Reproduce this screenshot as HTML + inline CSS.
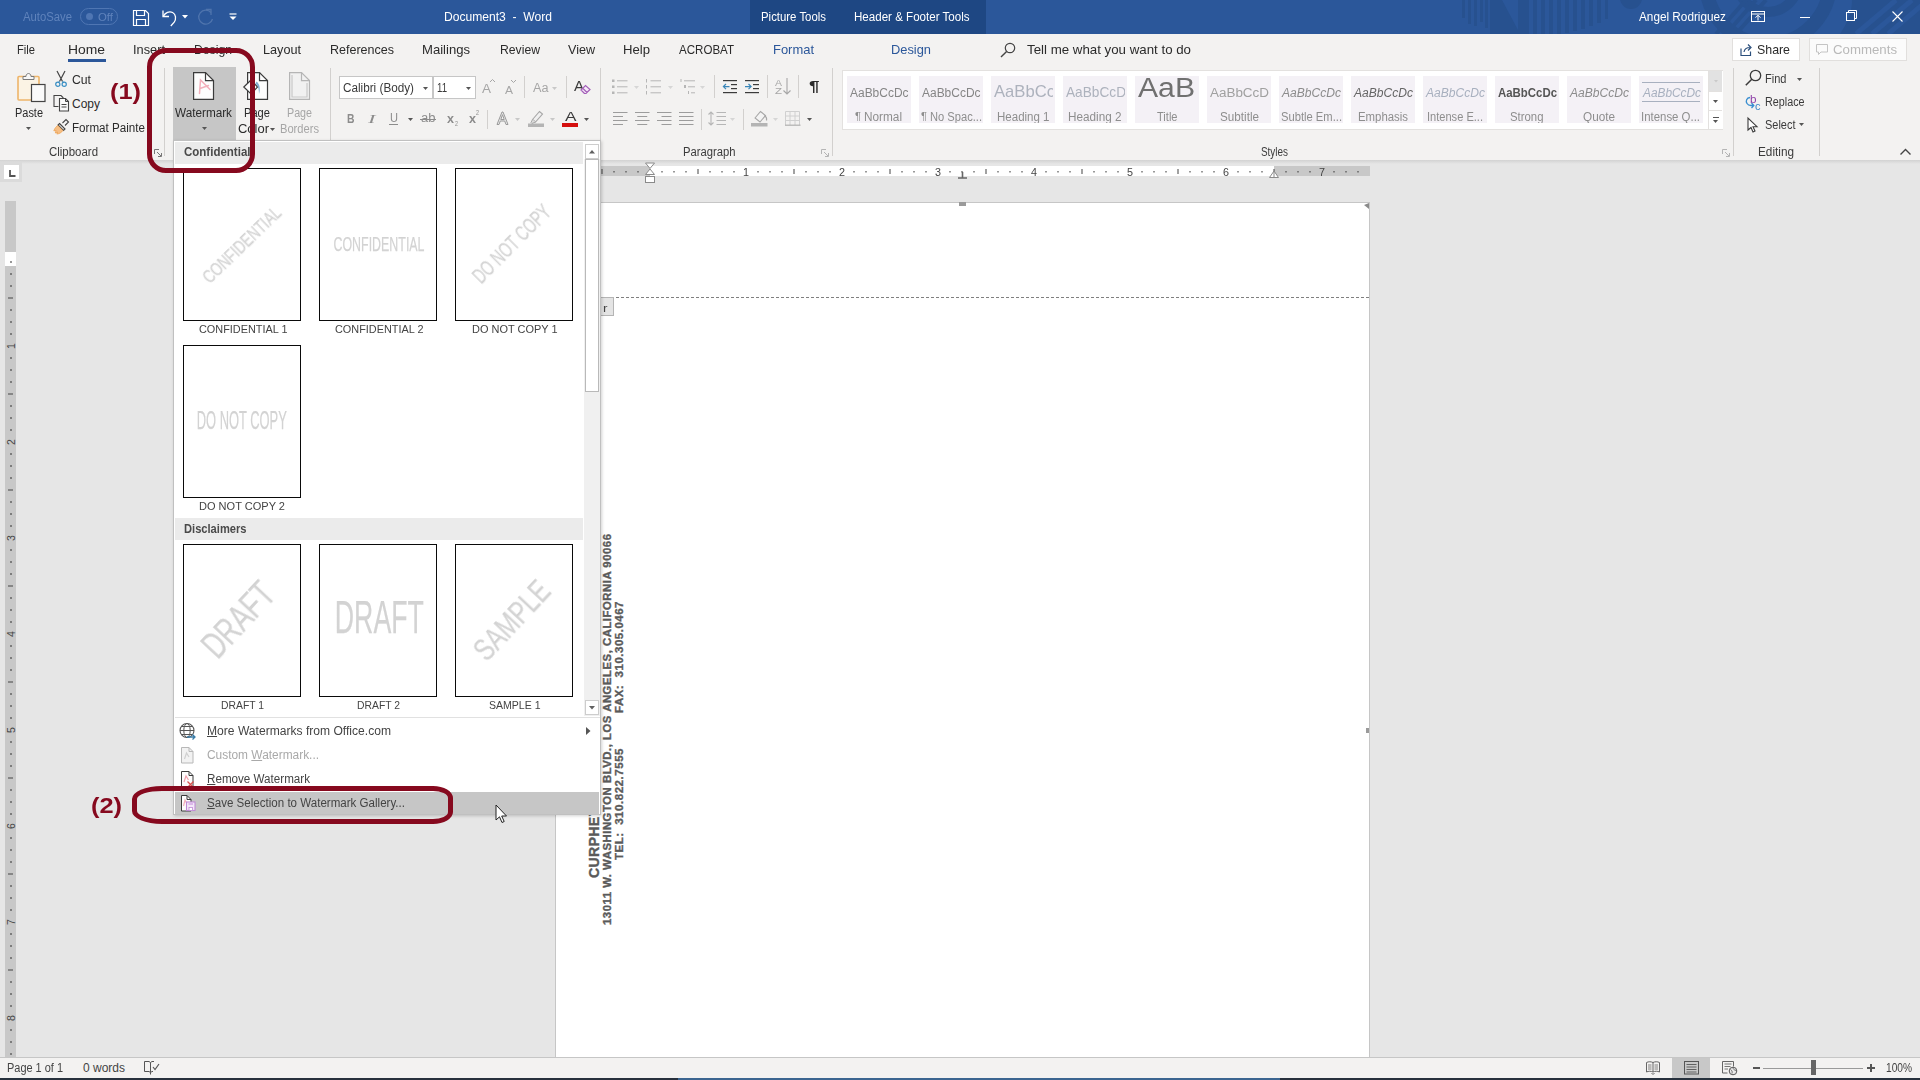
<!DOCTYPE html>
<html><head><meta charset="utf-8"><title>Document3 - Word</title>
<style>
html,body{margin:0;padding:0;}
body{width:1920px;height:1080px;overflow:hidden;position:relative;background:#e6e6e6;font-family:"Liberation Sans",sans-serif;}
div,svg,span.t{position:absolute;}
span.t{white-space:pre;transform-origin:0 50%;}
svg{overflow:visible;}
u{text-decoration:underline;}
</style></head><body>
<div style="left:0px;top:0px;width:1920px;height:34px;background:#2b579a;"></div>
<svg style="left:0px;top:0px;overflow:hidden;" width="1920" height="34" viewBox="0 0 1920 34"><g fill="#27518f">
<rect x="1462" y="0" width="3" height="18"/><rect x="1468" y="0" width="3" height="24"/><rect x="1474" y="0" width="3" height="26"/><rect x="1480" y="0" width="3" height="22"/><rect x="1485" y="0" width="3" height="28"/>
<path d="M1490 0h12l16 30v-30h11v34h-39z"/>
<rect x="1533" y="0" width="4" height="34"/><rect x="1541" y="0" width="4" height="34"/><rect x="1549" y="0" width="4" height="34"/><rect x="1557" y="0" width="4" height="34"/><rect x="1565" y="0" width="4" height="33"/><rect x="1573" y="0" width="4" height="31"/><rect x="1581" y="0" width="4" height="29"/><rect x="1589" y="0" width="4" height="26"/><rect x="1597" y="0" width="4" height="23"/><rect x="1605" y="0" width="3" height="19"/>
<circle cx="1631" cy="-2" r="11"/>
</g>
<g fill="none" stroke="#27518f"><circle cx="1768" cy="-18" r="62" stroke-width="14"/><circle cx="1768" cy="-18" r="30" stroke-width="10"/>
<path d="M1716 34l30-34M1726 34l30-34M1736 34l30-34" stroke-width="4"/></g>
<g fill="#27518f"><path d="M1840 34c8-12 12-22 12-34h68v34z"/></g>
<g fill="none" stroke="#2b579a" stroke-width="5"><path d="M1856 34l40-34M1872 34l40-34M1888 34l40-34"/></g></svg>
<div style="left:750px;top:0px;width:236px;height:34px;background:#1e4783;"></div>
<div style="left:0px;top:34px;width:1920px;height:127px;background:#f3f2f1;"></div>
<div style="left:0px;top:160px;width:1920px;height:4px;background:linear-gradient(#d2d2d2,#e6e6e6);"></div>
<div style="left:555px;top:202px;width:815px;height:856px;background:#ffffff;border-left:1px solid #c6c6c6;border-top:1px solid #c6c6c6;border-right:1px solid #c6c6c6;box-sizing:border-box;"></div>
<div style="left:0px;top:1057px;width:1920px;height:21px;background:#f3f2f1;border-top:1px solid #c6c6c6;box-sizing:border-box;"></div>
<div style="left:0px;top:1078px;width:1920px;height:2px;background:#27313d;"></div>
<div style="left:678px;top:1078px;width:602px;height:2px;background:#3b6590;"></div>
<span class="t" style="left:23px;top:8.5px;font-size:12px;line-height:16px;color:#5f83bc;transform:scaleX(0.9416);">AutoSave</span>
<div style="left:80px;top:8px;width:38px;height:17px;border:1px solid #4f76b3;border-radius:9px;box-sizing:border-box;"></div>
<div style="left:86px;top:13px;width:7px;height:7px;background:#4f76b3;border-radius:50%;"></div>
<span class="t" style="left:98px;top:9.5px;font-size:11px;line-height:14px;color:#5f83bc;transform:scaleX(1.0366);">Off</span>
<svg style="left:132px;top:9px;" width="18" height="18" viewBox="0 0 18 18"><path d="M1.5 1.5h12l3 3v12h-15z M4.5 1.5v5h8v-5 M4.5 16.5v-6h9v6" fill="none" stroke="#fff" stroke-width="1.2"/></svg>
<svg style="left:161px;top:8px;" width="18" height="18" viewBox="0 0 18 18"><path d="M2 2.5v6h6" fill="none" stroke="#fff" stroke-width="1.3"/><path d="M2.3 8.2c2-3.6 6-5.4 9.300-3.700c3.500 1.900 3.700 6.500 1.600 9.700l-3.400 3.800" fill="none" stroke="#fff" stroke-width="1.3"/></svg>
<svg style="left:182px;top:15px;" width="6" height="4" viewBox="0 0 6 4"><path d="M0 0h6l-3 3.500z" fill="#fff"/></svg>
<svg style="left:196px;top:8px;" width="18" height="18" viewBox="0 0 18 18"><path d="M10 1.500h5v5.500" fill="none" stroke="#4f74ad" stroke-width="1.300"/><path d="M15 4.500a7 7 0 1 0 1.500 6.500" fill="none" stroke="#4f74ad" stroke-width="1.300"/></svg>
<svg style="left:229px;top:13px;" width="8" height="8" viewBox="0 0 8 8"><path d="M0.500 1h7" stroke="#fff" stroke-width="1.200"/><path d="M0.500 3.500h7l-3.500 3.500z" fill="#fff"/></svg>
<span class="t" style="left:444px;top:8.5px;font-size:12px;line-height:16px;color:#ffffff;transform:scaleX(1.0079);">Document3  -  Word</span>
<span class="t" style="left:761px;top:8.5px;font-size:12px;line-height:16px;color:#ffffff;transform:scaleX(0.9492);">Picture Tools</span>
<span class="t" style="left:854px;top:8.5px;font-size:12px;line-height:16px;color:#ffffff;transform:scaleX(0.9638);">Header &amp; Footer Tools</span>
<span class="t" style="left:1639px;top:9.0px;font-size:12px;line-height:16px;color:#ffffff;transform:scaleX(0.9806);">Angel Rodriguez</span>
<svg style="left:1751px;top:10.5px;" width="15" height="12" viewBox="0 0 15 12"><rect x="0.500" y="0.500" width="13" height="10" fill="none" stroke="#fff"/><path d="M0.500 3h13" stroke="#fff"/><path d="M7 9.500v-5M4.500 6.700l2.500-2.500 2.500 2.500" fill="none" stroke="#fff"/></svg>
<div style="left:1800px;top:17px;width:10px;height:1px;background:#ffffff;"></div>
<svg style="left:1846px;top:10px;" width="12" height="12" viewBox="0 0 12 12"><rect x="0.500" y="2.500" width="8" height="8" fill="none" stroke="#fff"/><path d="M2.500 2.500v-2h8v8h-2" fill="none" stroke="#fff"/></svg>
<svg style="left:1892px;top:11px;" width="11" height="11" viewBox="0 0 11 11"><path d="M0.500 0.500l10 10M10.500 0.500l-10 10" stroke="#fff" stroke-width="1.100"/></svg>
<span class="t" style="left:17px;top:41.0px;font-size:13px;line-height:17px;color:#2b2b2b;transform:scaleX(0.8594);">File</span>
<span class="t" style="left:68px;top:41.0px;font-size:13px;line-height:17px;color:#2b2b2b;transform:scaleX(1.0670);">Home</span>
<span class="t" style="left:133px;top:41.0px;font-size:13px;line-height:17px;color:#2b2b2b;transform:scaleX(0.9842);">Insert</span>
<span class="t" style="left:194px;top:41.0px;font-size:13px;line-height:17px;color:#2b2b2b;transform:scaleX(0.9391);">Design</span>
<span class="t" style="left:263px;top:41.0px;font-size:13px;line-height:17px;color:#2b2b2b;transform:scaleX(0.9736);">Layout</span>
<span class="t" style="left:330px;top:41.0px;font-size:13px;line-height:17px;color:#2b2b2b;transform:scaleX(0.9627);">References</span>
<span class="t" style="left:422px;top:41.0px;font-size:13px;line-height:17px;color:#2b2b2b;transform:scaleX(1.0067);">Mailings</span>
<span class="t" style="left:500px;top:41.0px;font-size:13px;line-height:17px;color:#2b2b2b;transform:scaleX(0.9385);">Review</span>
<span class="t" style="left:568px;top:41.0px;font-size:13px;line-height:17px;color:#2b2b2b;transform:scaleX(0.9663);">View</span>
<span class="t" style="left:623px;top:41.0px;font-size:13px;line-height:17px;color:#2b2b2b;transform:scaleX(1.0099);">Help</span>
<span class="t" style="left:679px;top:41.0px;font-size:13px;line-height:17px;color:#2b2b2b;transform:scaleX(0.8889);">ACROBAT</span>
<div style="left:68px;top:59px;width:38px;height:3px;background:#2b579a;"></div>
<span class="t" style="left:773px;top:41.0px;font-size:13px;line-height:17px;color:#2b579a;transform:scaleX(0.9958);">Format</span>
<span class="t" style="left:891px;top:41.0px;font-size:13px;line-height:17px;color:#2b579a;transform:scaleX(0.9885);">Design</span>
<svg style="left:1000px;top:42px;" width="16" height="16" viewBox="0 0 16 16"><circle cx="10" cy="6" r="4.700" fill="none" stroke="#444" stroke-width="1.200"/><path d="M6.600 9.400l-5.600 5.600" stroke="#444" stroke-width="1.400"/></svg>
<span class="t" style="left:1027px;top:41.0px;font-size:13px;line-height:17px;color:#2b2b2b;transform:scaleX(1.0223);">Tell me what you want to do</span>
<div style="left:1732px;top:38px;width:68px;height:23px;background:#ffffff;border:1px solid #e1dfdd;box-sizing:border-box;"></div>
<svg style="left:1740px;top:43px;" width="13" height="13" viewBox="0 0 13 13"><path d="M1 5.500v7h9.500v-4" fill="none" stroke="#2b4f7c" stroke-width="1.200"/><path d="M4 9c.5-3 2.500-4.500 6-4.500M8 1.500l3 3-3 3" fill="none" stroke="#2b4f7c" stroke-width="1.200"/></svg>
<span class="t" style="left:1757px;top:41.0px;font-size:13px;line-height:17px;color:#2b2b2b;transform:scaleX(0.9513);">Share</span>
<div style="left:1809px;top:38px;width:98px;height:23px;background:#fbfbfb;border:1px solid #e1dfdd;box-sizing:border-box;"></div>
<svg style="left:1816px;top:44px;" width="13" height="12" viewBox="0 0 13 12"><path d="M0.500 0.500h11v7.500h-6.500l-2.500 2.500v-2.500h-2z" fill="none" stroke="#c4c4c4"/></svg>
<span class="t" style="left:1833px;top:41.0px;font-size:13px;line-height:17px;color:#b9b9b9;transform:scaleX(1.0183);">Comments</span>
<svg style="left:17px;top:71px;" width="29" height="31" viewBox="0 0 29 31"><rect x="1" y="5.500" width="21" height="23.500" rx="1" fill="#fbf3e4" stroke="#eeb56a" stroke-width="1.600"/>
<path d="M6 8.500v-3h3c0-4 5-4 5 0h3v3z" fill="#f7f7f7" stroke="#7a7a7a" stroke-width="1"/>
<rect x="14.500" y="13.500" width="13.500" height="17" fill="#fafafa" stroke="#444" stroke-width="1.200"/></svg>
<span class="t" style="left:15px;top:104.5px;font-size:12px;line-height:16px;color:#2b2b2b;transform:scaleX(0.9125);">Paste</span>
<svg style="left:26.0px;top:127.0px;" width="5" height="3.5" viewBox="0 0 5 3.5"><path d="M0 0h5l-2.5 3.0z" fill="#555"/></svg>
<svg style="left:55px;top:70px;" width="12" height="18" viewBox="0 0 12 18"><path d="M2 1l5.500 10.500M10 1l-5.500 10.500" stroke="#444" stroke-width="1.200" fill="none"/>
<circle cx="2.800" cy="14.300" r="2.100" fill="none" stroke="#3a8fc4" stroke-width="1.200"/><circle cx="9.200" cy="14.300" r="2.100" fill="none" stroke="#3a8fc4" stroke-width="1.200"/>
<path d="M4.500 11.500l-1 1.200M7.500 11.500l1 1.200" stroke="#3a8fc4" stroke-width="1.200"/></svg>
<span class="t" style="left:72px;top:71.5px;font-size:12px;line-height:16px;color:#2b2b2b;transform:scaleX(1.0175);">Cut</span>
<svg style="left:53px;top:95px;" width="17" height="17" viewBox="0 0 17 17"><path d="M5.500 11.500h-4.500v-11h7l2 2v1" fill="none" stroke="#444" stroke-width="1.100"/>
<path d="M6.500 3.500h6l3 3v9.500h-9z" fill="#fafafa" stroke="#444" stroke-width="1.100"/><path d="M12.500 3.500v3h3" fill="none" stroke="#444" stroke-width="1"/>
<path d="M8.500 9.500h5M8.500 12h5" stroke="#444" stroke-width="1"/></svg>
<span class="t" style="left:72px;top:96.0px;font-size:12px;line-height:16px;color:#2b2b2b;">Copy</span>
<svg style="left:53px;top:118px;" width="17" height="17" viewBox="0 0 17 17"><path d="M9.500 5l3.500-3.500 2.500 2.500-3.500 3.500" fill="#f5f5f5" stroke="#444" stroke-width="1.100"/>
<path d="M6.500 5.500l5.500 5.500-1.500 1.500-5.500-5.500z" fill="#f5f5f5" stroke="#444" stroke-width="1.100"/>
<path d="M4.800 7.500l5 5c-1 2-4 3.500-6 3.500l1-2-2.500 1 .8-2.500-2.300.3c1-2.500 2.500-4.500 4-5.300z" fill="#f6bf86" stroke="#eda354" stroke-width="0.800"/></svg>
<span class="t" style="left:72px;top:119.5px;font-size:12px;line-height:16px;color:#2b2b2b;transform:scaleX(0.9686);">Format Painte</span>
<span class="t" style="left:49px;top:143.5px;font-size:12px;line-height:16px;color:#3b3b3b;transform:scaleX(0.9540);">Clipboard</span>
<svg style="left:154px;top:149px;" width="8" height="8" viewBox="0 0 8 8"><path d="M0.500 5v-4.500h4.500" fill="none" stroke="#777"/><path d="M3 3l4 4M7.500 4v3.500h-3.500" fill="none" stroke="#777"/></svg>
<div style="left:164px;top:68px;width:1px;height:88px;background:#d2d0ce;"></div>
<div style="left:173px;top:67px;width:63px;height:74px;background:#c6c6c6;"></div>
<svg style="left:193px;top:72px;" width="21" height="28" viewBox="0 0 21 28"><path d="M0.600 0.600h11.900l8 8v18.800h-19.900z" fill="#fdfdfd" stroke="#3b3b3b" stroke-width="1.200"/><path d="M12.500 0.600v8h8" fill="none" stroke="#3b3b3b" stroke-width="1.200"/>
<path d="M6.500 21.500l1-13.500 9.500 9.500M7 16.500l8.500-3" fill="none" stroke="#f3b0bb" stroke-width="1.500" stroke-linecap="round"/></svg>
<span class="t" style="left:175px;top:104.5px;font-size:12px;line-height:16px;color:#2b2b2b;transform:scaleX(0.9789);">Watermark</span>
<svg style="left:201.5px;top:127.0px;" width="5" height="3.5" viewBox="0 0 5 3.5"><path d="M0 0h5l-2.5 3.0z" fill="#555"/></svg>
<svg style="left:243px;top:72px;" width="25" height="28" viewBox="0 0 25 28"><path d="M4.600 0.600h11.900l8 8v18.800h-19.900z" fill="#fdfdfd" stroke="#3b3b3b" stroke-width="1.200"/><path d="M16.500 0.600v8h8" fill="none" stroke="#3b3b3b" stroke-width="1.200"/>
<path d="M8 8l-7.200 7 7.200 7 6.500-7z" fill="#fdfdfd" stroke="#3b3b3b" stroke-width="1.200"/><path d="M13.500 9.500c3.500 2.500 4 8 2.500 12.500 0-4.500-.5-7.500-3.500-10.500z" fill="#6b9cc8" opacity="0.850"/></svg>
<span class="t" style="left:244px;top:105.0px;font-size:12px;line-height:16px;color:#2b2b2b;transform:scaleX(0.9277);">Page</span>
<span class="t" style="left:238px;top:121.0px;font-size:12px;line-height:16px;color:#2b2b2b;transform:scaleX(1.0811);">Color</span>
<svg style="left:270.0px;top:127.5px;" width="5" height="3.5" viewBox="0 0 5 3.5"><path d="M0 0h5l-2.5 3.0z" fill="#555"/></svg>
<svg style="left:289px;top:72px;" width="21" height="28" viewBox="0 0 21 28"><path d="M0.600 0.600h11.900l8 8v18.800h-19.900z" fill="#f1f1f1" stroke="#b5b5b5" stroke-width="1.200"/><path d="M12.500 0.600v8h8" fill="none" stroke="#b5b5b5" stroke-width="1.200"/>
<path d="M3 3v22h15v-14" fill="none" stroke="#c9c9c9" stroke-width="1.200"/></svg>
<span class="t" style="left:287px;top:105.0px;font-size:12px;line-height:16px;color:#a6a6a6;transform:scaleX(0.8921);">Page</span>
<span class="t" style="left:280px;top:121.0px;font-size:12px;line-height:16px;color:#a6a6a6;transform:scaleX(0.9282);">Borders</span>
<div style="left:330px;top:68px;width:1px;height:73px;background:#d2d0ce;"></div>
<div style="left:339px;top:76px;width:94px;height:23px;background:#fff;border:1px solid #c6c6c6;box-sizing:border-box;"></div>
<div style="left:433px;top:76px;width:43px;height:23px;background:#fff;border:1px solid #c6c6c6;border-left:1px solid #c6c6c6;box-sizing:border-box;"></div>
<span class="t" style="left:342.5px;top:79.8px;font-size:12px;line-height:16px;color:#3a3a3a;transform:scaleX(0.9768);">Calibri (Body)</span>
<svg style="left:422.8px;top:87.0px;" width="5" height="3.5" viewBox="0 0 5 3.5"><path d="M0 0h5l-2.5 3.0z" fill="#555"/></svg>
<span class="t" style="left:437px;top:79.8px;font-size:12px;line-height:16px;color:#3a3a3a;transform:scaleX(0.8028);">11</span>
<svg style="left:465.8px;top:87.0px;" width="5" height="3.5" viewBox="0 0 5 3.5"><path d="M0 0h5l-2.5 3.0z" fill="#555"/></svg>
<span class="t" style="left:482px;top:80.5px;font-size:12px;line-height:16px;color:#a6a6a6;transform:scaleX(1.1243);">A</span>
<svg style="left:490px;top:79px;" width="5" height="3" viewBox="0 0 5 3"><path d="M0 3l2.500-2.500 2.500 2.500" fill="none" stroke="#a6a6a6"/></svg>
<span class="t" style="left:504.5px;top:82.5px;font-size:10.5px;line-height:14px;color:#a6a6a6;transform:scaleX(1.1423);">A</span>
<svg style="left:511px;top:80px;" width="5" height="3" viewBox="0 0 5 3"><path d="M0 0l2.500 2.500 2.500-2.500" fill="none" stroke="#a6a6a6"/></svg>
<div style="left:524px;top:76px;width:1px;height:22px;background:#d2d0ce;"></div>
<span class="t" style="left:532.5px;top:80.0px;font-size:12.5px;line-height:16px;color:#a6a6a6;transform:scaleX(1.0138);">Aa</span>
<svg style="left:551.9px;top:87.0px;" width="5" height="3.5" viewBox="0 0 5 3.5"><path d="M0 0h5l-2.5 3.0z" fill="#c8c8c8"/></svg>
<div style="left:566px;top:76px;width:1px;height:22px;background:#d2d0ce;"></div>
<span class="t" style="left:574px;top:76.5px;font-size:14px;line-height:18px;color:#3b3b3b;transform:scaleX(1.0710);">A</span>
<svg style="left:580px;top:85px;" width="11" height="10" viewBox="0 0 11 10"><path d="M4.500 8.500l-3.500-3.500 4.500-4.500 4.500 4 -4 4z M3 3.500l4 4" fill="#f5eaf8" stroke="#a35fb8" stroke-width="1.200"/></svg>
<span class="t" style="left:346.5px;top:109.5px;font-size:13px;line-height:17px;color:#8c8c8c;font-weight:bold;transform:scaleX(0.7989);">B</span>
<span class="t" style="left:368px;top:109.5px;font-size:13px;line-height:17px;color:#8c8c8c;font-style:italic;font-family:'Liberation Serif',serif;transform:scaleX(1.7322);">I</span>
<span class="t" style="left:389.5px;top:109.5px;font-size:12.5px;line-height:16px;color:#8c8c8c;transform:scaleX(0.8863);">U</span>
<div style="left:389px;top:124px;width:9px;height:1px;background:#8c8c8c;"></div>
<svg style="left:407.7px;top:117.5px;" width="5" height="3.5" viewBox="0 0 5 3.5"><path d="M0 0h5l-2.5 3.0z" fill="#555"/></svg>
<span class="t" style="left:420.5px;top:110.0px;font-size:12px;line-height:16px;color:#8c8c8c;transform:scaleX(1.0864);">ab</span>
<div style="left:420px;top:119px;width:16px;height:1px;background:#8c8c8c;"></div>
<span class="t" style="left:447px;top:110.5px;font-size:12.5px;line-height:16px;color:#8c8c8c;font-weight:bold;transform:scaleX(1.0070);">x</span>
<span class="t" style="left:454.5px;top:119.5px;font-size:6.5px;line-height:8px;color:#8c8c8c;transform:scaleX(0.8297);">2</span>
<span class="t" style="left:468.5px;top:110.5px;font-size:12.5px;line-height:16px;color:#8c8c8c;font-weight:bold;transform:scaleX(1.0070);">x</span>
<span class="t" style="left:476px;top:109.0px;font-size:6.5px;line-height:8px;color:#8c8c8c;transform:scaleX(0.8297);">2</span>
<div style="left:487px;top:110px;width:1px;height:19px;background:#d2d0ce;"></div>
<svg style="left:496px;top:111px;" width="13" height="14" viewBox="0 0 13 14"><path d="M1 13.500l5-12.500h1l5 12.500h-2l-1.300-3.500h-4.400l-1.300 3.500z M4.800 8.500h3.400l-1.700-4.800z" fill="#e9e9e9" stroke="#9a9a9a" stroke-width="1" fill-rule="evenodd"/></svg>
<svg style="left:515.3px;top:117.5px;" width="5" height="3.5" viewBox="0 0 5 3.5"><path d="M0 0h5l-2.5 3.0z" fill="#c8c8c8"/></svg>
<svg style="left:528px;top:110px;" width="16" height="17" viewBox="0 0 16 17"><path d="M4.500 9.500l7-8 3 2.500-7 8z" fill="#f0f0f0" stroke="#a6a6a6" stroke-width="1.100"/><path d="M4.500 9.500l-1.500 3 1 1 3.500-1.500" fill="#ddd" stroke="#a6a6a6" stroke-width="1"/><rect x="0" y="13.500" width="16" height="3.500" fill="#b4b4b4"/></svg>
<svg style="left:550.2px;top:117.5px;" width="5" height="3.5" viewBox="0 0 5 3.5"><path d="M0 0h5l-2.5 3.0z" fill="#c8c8c8"/></svg>
<span class="t" style="left:564.5px;top:108.0px;font-size:13px;line-height:17px;color:#3b3b3b;transform:scaleX(1.3264);">A</span>
<div style="left:562px;top:123px;width:16px;height:4px;background:#d50f0f;"></div>
<svg style="left:584.2px;top:117.5px;" width="5" height="3.5" viewBox="0 0 5 3.5"><path d="M0 0h5l-2.5 3.0z" fill="#555"/></svg>
<div style="left:600px;top:68px;width:1px;height:73px;background:#d2d0ce;"></div>
<svg style="left:612px;top:79px;" width="16" height="15" viewBox="0 0 16 15"><rect x="0" y="0.5" width="2.500" height="2.500" fill="#b6b6b6"/><rect x="5" y="1.3" width="10.500" height="1" fill="#b6b6b6"/><rect x="0" y="6.5" width="2.500" height="2.500" fill="#b6b6b6"/><rect x="5" y="7.3" width="10.500" height="1" fill="#b6b6b6"/><rect x="0" y="12.5" width="2.500" height="2.500" fill="#b6b6b6"/><rect x="5" y="13.3" width="10.500" height="1" fill="#b6b6b6"/></svg>
<svg style="left:633.5px;top:85.5px;" width="5" height="3.5" viewBox="0 0 5 3.5"><path d="M0 0h5l-2.5 3.0z" fill="#d6d6d6"/></svg>
<svg style="left:645px;top:79px;" width="17" height="15" viewBox="0 0 17 15"><rect x="1" y="0.0" width="1" height="3.500" fill="#b6b6b6"/><rect x="5.500" y="1.3" width="10.500" height="1" fill="#b6b6b6"/><rect x="1" y="6.0" width="1" height="3.500" fill="#b6b6b6"/><rect x="5.500" y="7.3" width="10.500" height="1" fill="#b6b6b6"/><rect x="1" y="12.0" width="1" height="3.500" fill="#b6b6b6"/><rect x="5.500" y="13.3" width="10.500" height="1" fill="#b6b6b6"/></svg>
<svg style="left:667.5px;top:85.5px;" width="5" height="3.5" viewBox="0 0 5 3.5"><path d="M0 0h5l-2.5 3.0z" fill="#d6d6d6"/></svg>
<svg style="left:680px;top:79px;" width="16" height="15" viewBox="0 0 16 15"><rect x="0.500" y="0" width="1" height="3" fill="#b6b6b6"/><rect x="4" y="1.300" width="11" height="1" fill="#b6b6b6"/><rect x="4" y="6" width="2" height="3" fill="#b6b6b6"/><rect x="8" y="7.300" width="7" height="1" fill="#b6b6b6"/><rect x="8" y="12" width="1" height="3" fill="#b6b6b6"/><rect x="11" y="13.300" width="4" height="1" fill="#b6b6b6"/></svg>
<svg style="left:700.0px;top:85.5px;" width="5" height="3.5" viewBox="0 0 5 3.5"><path d="M0 0h5l-2.5 3.0z" fill="#d6d6d6"/></svg>
<div style="left:714px;top:75px;width:1px;height:23px;background:#d2d0ce;"></div>
<svg style="left:723px;top:80px;" width="15" height="14" viewBox="0 0 15 14"><rect x="0" y="0" width="14" height="1.200" fill="#3b3b3b"/><rect x="8" y="4" width="6" height="1.200" fill="#3b3b3b"/><rect x="8" y="8" width="6" height="1.200" fill="#3b3b3b"/><rect x="0" y="12" width="14" height="1.200" fill="#3b3b3b"/><path d="M6.500 6.600h-6M3 4l-2.600 2.600 2.600 2.600" fill="none" stroke="#3a86b8" stroke-width="1.200"/></svg>
<svg style="left:745px;top:80px;" width="15" height="14" viewBox="0 0 15 14"><rect x="0" y="0" width="14" height="1.200" fill="#3b3b3b"/><rect x="8" y="4" width="6" height="1.200" fill="#3b3b3b"/><rect x="8" y="8" width="6" height="1.200" fill="#3b3b3b"/><rect x="0" y="12" width="14" height="1.200" fill="#3b3b3b"/><path d="M0 6.600h6M3.500 4l2.600 2.600-2.600 2.600" fill="none" stroke="#3a86b8" stroke-width="1.200"/></svg>
<div style="left:767px;top:75px;width:1px;height:23px;background:#d2d0ce;"></div>
<span class="t" style="left:775px;top:76.5px;font-size:9.5px;line-height:12px;color:#a6a6a6;transform:scaleX(1.1048);">A</span>
<span class="t" style="left:775px;top:85.0px;font-size:9.5px;line-height:12px;color:#a6a6a6;transform:scaleX(1.2062);">Z</span>
<svg style="left:783px;top:78px;" width="8" height="17" viewBox="0 0 8 17"><path d="M4 0v16M0.500 12.500l3.500 3.500 3.500-3.500" fill="none" stroke="#a6a6a6" stroke-width="1.100"/></svg>
<div style="left:798px;top:75px;width:1px;height:23px;background:#d2d0ce;"></div>
<span class="t" style="left:808.5px;top:77.0px;font-size:14px;line-height:18px;color:#2b2b2b;font-weight:bold;transform:scaleX(1.3486);">¶</span>
<svg style="left:612.5px;top:112px;" width="14.5" height="14" viewBox="0 0 14.5 14"><rect x="0" y="0" width="14.5" height="1" fill="#9c9c9c"/><rect x="0" y="4" width="10" height="1" fill="#9c9c9c"/><rect x="0" y="8" width="14.5" height="1" fill="#9c9c9c"/><rect x="0" y="12" width="10" height="1" fill="#9c9c9c"/></svg>
<svg style="left:634.5px;top:112px;" width="14.5" height="14" viewBox="0 0 14.5 14"><rect x="0.0" y="0" width="14.5" height="1" fill="#9c9c9c"/><rect x="2.25" y="4" width="10" height="1" fill="#9c9c9c"/><rect x="0.0" y="8" width="14.5" height="1" fill="#9c9c9c"/><rect x="2.25" y="12" width="10" height="1" fill="#9c9c9c"/></svg>
<svg style="left:656.5px;top:112px;" width="14.5" height="14" viewBox="0 0 14.5 14"><rect x="0.0" y="0" width="14.5" height="1" fill="#9c9c9c"/><rect x="4.5" y="4" width="10" height="1" fill="#9c9c9c"/><rect x="0.0" y="8" width="14.5" height="1" fill="#9c9c9c"/><rect x="4.5" y="12" width="10" height="1" fill="#9c9c9c"/></svg>
<svg style="left:678.5px;top:112px;" width="14.5" height="14" viewBox="0 0 14.5 14"><rect x="0" y="0" width="14.5" height="1" fill="#9c9c9c"/><rect x="0" y="4" width="14.5" height="1" fill="#9c9c9c"/><rect x="0" y="8" width="14.5" height="1" fill="#9c9c9c"/><rect x="0" y="12" width="14.5" height="1" fill="#9c9c9c"/></svg>
<div style="left:701px;top:109px;width:1px;height:21px;background:#d2d0ce;"></div>
<svg style="left:708px;top:111px;" width="19" height="15" viewBox="0 0 19 15"><path d="M3 1v13M0.500 3.500l2.500-2.500 2.500 2.500M0.500 11.500l2.500 2.500 2.500-2.500" fill="none" stroke="#b6b6b6" stroke-width="1.100"/><rect x="8.500" y="1" width="9.500" height="1" fill="#b6b6b6"/><rect x="8.500" y="5" width="9.500" height="1" fill="#b6b6b6"/><rect x="8.500" y="9" width="9.500" height="1" fill="#b6b6b6"/><rect x="8.500" y="13" width="9.500" height="1" fill="#b6b6b6"/></svg>
<svg style="left:729.5px;top:117.5px;" width="5" height="3.5" viewBox="0 0 5 3.5"><path d="M0 0h5l-2.5 3.0z" fill="#d6d6d6"/></svg>
<div style="left:743px;top:109px;width:1px;height:21px;background:#d2d0ce;"></div>
<svg style="left:751px;top:110px;" width="17" height="17" viewBox="0 0 17 17"><path d="M4 8l5.500-6.500 5 4-5.500 6.500z" fill="#f3f3f3" stroke="#a6a6a6" stroke-width="1.100"/><path d="M13.500 5.500c1.500 1 2.500 3 2 5" fill="none" stroke="#a6a6a6" stroke-width="1.100"/><rect x="0" y="13" width="16.500" height="3.500" fill="#b4b4b4"/></svg>
<svg style="left:772.5px;top:117.5px;" width="5" height="3.5" viewBox="0 0 5 3.5"><path d="M0 0h5l-2.5 3.0z" fill="#d6d6d6"/></svg>
<svg style="left:785px;top:111px;" width="16" height="15" viewBox="0 0 16 15"><path d="M0.500 0.500h14M0.500 5h14M0.500 9.500h14M0.500 0.500v13.500M5 0.500v13.500M10 0.500v13.500M14.500 0.500v13.500" fill="none" stroke="#d0d0d0" stroke-width="1"/><path d="M0 14.200h15.500" stroke="#b0b0b0" stroke-width="1.200"/></svg>
<svg style="left:807.2px;top:117.5px;" width="5" height="3.5" viewBox="0 0 5 3.5"><path d="M0 0h5l-2.5 3.0z" fill="#555"/></svg>
<span class="t" style="left:682.5px;top:143.5px;font-size:12px;line-height:16px;color:#3b3b3b;transform:scaleX(0.9368);">Paragraph</span>
<svg style="left:821px;top:149px;" width="8" height="8" viewBox="0 0 8 8"><path d="M0.500 5v-4.500h4.500" fill="none" stroke="#b5b5b5"/><path d="M3 3l4 4M7.500 4v3.500h-3.500" fill="none" stroke="#b5b5b5"/></svg>
<div style="left:832px;top:68px;width:1px;height:88px;background:#d2d0ce;"></div>
<div style="left:842px;top:70px;width:881px;height:60px;background:#ffffff;border:1px solid #e3e1df;box-sizing:border-box;"></div>
<div style="left:847px;top:76px;width:64px;height:47px;background:#f4f1f6;overflow:hidden;">
<div style="left:2px;top:0;width:59.500px;height:32px;overflow:hidden;">
<span class="t" style="left:0.5px;top:9.0px;font-size:12.5px;line-height:16px;color:#858585;transform:scaleX(0.9570);">AaBbCcDc</span>
</div>
<span class="t" style="left:8px;top:34.0px;font-size:10px;line-height:13px;color:#8e8e8e;transform:scaleX(1.1169);">¶</span>
<span class="t" style="left:17px;top:32.5px;font-size:12px;line-height:16px;color:#8e8e8e;transform:scaleX(0.9826);">Normal</span>
</div>
<div style="left:919px;top:76px;width:64px;height:47px;background:#f4f1f6;overflow:hidden;">
<div style="left:2px;top:0;width:59.500px;height:32px;overflow:hidden;">
<span class="t" style="left:0.5px;top:9.0px;font-size:12.5px;line-height:16px;color:#858585;transform:scaleX(0.9570);">AaBbCcDc</span>
</div>
<span class="t" style="left:2px;top:34.0px;font-size:10px;line-height:13px;color:#8e8e8e;transform:scaleX(1.1169);">¶</span>
<span class="t" style="left:11px;top:32.5px;font-size:12px;line-height:16px;color:#8e8e8e;transform:scaleX(0.9281);">No Spac...</span>
</div>
<div style="left:991px;top:76px;width:64px;height:47px;background:#f4f1f6;overflow:hidden;">
<div style="left:2px;top:0;width:59.500px;height:32px;overflow:hidden;">
<span class="t" style="left:1px;top:5.0px;font-size:17px;line-height:22px;color:#adb2bd;transform:scaleX(0.9781);">AaBbCc</span>
</div>
<span class="t" style="left:5.5px;top:32.5px;font-size:12px;line-height:16px;color:#8e8e8e;transform:scaleX(0.9597);">Heading 1</span>
</div>
<div style="left:1063px;top:76px;width:64px;height:47px;background:#f4f1f6;overflow:hidden;">
<div style="left:2px;top:0;width:59.500px;height:32px;overflow:hidden;">
<span class="t" style="left:1px;top:6.0px;font-size:15px;line-height:20px;color:#adb2bd;transform:scaleX(0.9110);">AaBbCcD</span>
</div>
<span class="t" style="left:5px;top:32.5px;font-size:12px;line-height:16px;color:#8e8e8e;transform:scaleX(0.9780);">Heading 2</span>
</div>
<div style="left:1135px;top:76px;width:64px;height:47px;background:#f4f1f6;overflow:hidden;">
<div style="left:2px;top:0;width:59.500px;height:32px;overflow:hidden;">
<span class="t" style="left:1px;top:-5.0px;font-size:27px;line-height:35px;color:#707070;transform:scaleX(1.1169);">AaB</span>
</div>
<span class="t" style="left:21.5px;top:32.5px;font-size:12px;line-height:16px;color:#8e8e8e;transform:scaleX(0.9224);">Title</span>
</div>
<div style="left:1207px;top:76px;width:64px;height:47px;background:#f4f1f6;overflow:hidden;">
<div style="left:2px;top:0;width:59.500px;height:32px;overflow:hidden;">
<span class="t" style="left:1px;top:9.0px;font-size:12px;line-height:16px;color:#a0a0a0;transform:scaleX(1.1198);">AaBbCcD</span>
</div>
<span class="t" style="left:12.5px;top:32.5px;font-size:12px;line-height:16px;color:#8e8e8e;transform:scaleX(0.9744);">Subtitle</span>
</div>
<div style="left:1279px;top:76px;width:64px;height:47px;background:#f4f1f6;overflow:hidden;">
<div style="left:2px;top:0;width:59.500px;height:32px;overflow:hidden;">
<span class="t" style="left:1px;top:8.5px;font-size:12.5px;line-height:16px;color:#8c8c8c;font-style:italic;transform:scaleX(0.9651);">AaBbCcDc</span>
</div>
<span class="t" style="left:2px;top:32.5px;font-size:12px;line-height:16px;color:#8e8e8e;transform:scaleX(0.9332);">Subtle Em...</span>
</div>
<div style="left:1351px;top:76px;width:64px;height:47px;background:#f4f1f6;overflow:hidden;">
<div style="left:2px;top:0;width:59.500px;height:32px;overflow:hidden;">
<span class="t" style="left:1px;top:8.5px;font-size:12.5px;line-height:16px;color:#666;font-style:italic;transform:scaleX(0.9651);">AaBbCcDc</span>
</div>
<span class="t" style="left:7px;top:32.5px;font-size:12px;line-height:16px;color:#8e8e8e;transform:scaleX(0.9490);">Emphasis</span>
</div>
<div style="left:1423px;top:76px;width:64px;height:47px;background:#f4f1f6;overflow:hidden;">
<div style="left:2px;top:0;width:59.500px;height:32px;overflow:hidden;">
<span class="t" style="left:1px;top:8.5px;font-size:12.5px;line-height:16px;color:#a8b0bf;font-style:italic;transform:scaleX(0.9651);">AaBbCcDc</span>
</div>
<span class="t" style="left:4px;top:32.5px;font-size:12px;line-height:16px;color:#8e8e8e;transform:scaleX(0.9225);">Intense E...</span>
</div>
<div style="left:1495px;top:76px;width:64px;height:47px;background:#f4f1f6;overflow:hidden;">
<div style="left:2px;top:0;width:59.500px;height:32px;overflow:hidden;">
<span class="t" style="left:1px;top:8.5px;font-size:12.5px;line-height:16px;color:#555;font-weight:bold;transform:scaleX(0.9134);">AaBbCcDc</span>
</div>
<span class="t" style="left:14.5px;top:32.5px;font-size:12px;line-height:16px;color:#8e8e8e;transform:scaleX(0.9475);">Strong</span>
</div>
<div style="left:1567px;top:76px;width:64px;height:47px;background:#f4f1f6;overflow:hidden;">
<div style="left:2px;top:0;width:59.500px;height:32px;overflow:hidden;">
<span class="t" style="left:1px;top:8.5px;font-size:12.5px;line-height:16px;color:#8c8c8c;font-style:italic;transform:scaleX(0.9651);">AaBbCcDc</span>
</div>
<span class="t" style="left:15.5px;top:32.5px;font-size:12px;line-height:16px;color:#8e8e8e;transform:scaleX(0.9789);">Quote</span>
</div>
<div style="left:1639px;top:76px;width:64px;height:47px;background:#f4f1f6;overflow:hidden;">
<div style="left:2px;top:0;width:59.500px;height:32px;overflow:hidden;">
<span class="t" style="left:2px;top:8.5px;font-size:12.5px;line-height:16px;color:#a8b0bf;font-style:italic;transform:scaleX(0.9488);">AaBbCcDc</span>
</div>
<span class="t" style="left:2px;top:32.5px;font-size:12px;line-height:16px;color:#8e8e8e;transform:scaleX(0.9511);">Intense Q...</span>
<div style="left:3px;top:6px;width:58px;height:1px;background:#a8b0bf;"></div>
<div style="left:3px;top:25px;width:58px;height:1px;background:#a8b0bf;"></div>
</div>
<div style="left:1708px;top:71px;width:15px;height:58px;background:#ffffff;border-left:1px solid #e3e1df;box-sizing:border-box;"></div>
<div style="left:1709px;top:71px;width:13px;height:20px;background:#e2e2e2;"></div>
<svg style="left:1713.5px;top:79.5px;" width="4" height="3.5" viewBox="0 0 4 3.5"><path d="M0 0h4l-2.0 2.5z" fill="#c9c9c9"/></svg>
<div style="left:1709px;top:91px;width:13px;height:1px;background:#e3e1df;"></div>
<div style="left:1709px;top:110px;width:13px;height:1px;background:#e3e1df;"></div>
<svg style="left:1713.0px;top:100.0px;" width="5" height="3.5" viewBox="0 0 5 3.5"><path d="M0 0h5l-2.5 3.0z" fill="#555"/></svg>
<div style="left:1713px;top:117px;width:6px;height:1px;background:#555;"></div>
<svg style="left:1713.0px;top:120.0px;" width="5" height="3.5" viewBox="0 0 5 3.5"><path d="M0 0h5l-2.5 3.0z" fill="#555"/></svg>
<span class="t" style="left:1261px;top:143.5px;font-size:12px;line-height:16px;color:#3b3b3b;transform:scaleX(0.8262);">Styles</span>
<svg style="left:1722px;top:149px;" width="8" height="8" viewBox="0 0 8 8"><path d="M0.500 5v-4.500h4.500" fill="none" stroke="#b5b5b5"/><path d="M3 3l4 4M7.500 4v3.500h-3.500" fill="none" stroke="#b5b5b5"/></svg>
<div style="left:1733px;top:68px;width:1px;height:88px;background:#d2d0ce;"></div>
<svg style="left:1745px;top:69px;" width="17" height="17" viewBox="0 0 17 17"><circle cx="10.500" cy="6.500" r="5.200" fill="none" stroke="#3b3b3b" stroke-width="1.300"/><path d="M6.800 10.200l-6 6" stroke="#3b3b3b" stroke-width="1.500"/></svg>
<span class="t" style="left:1764.5px;top:71.0px;font-size:12px;line-height:16px;color:#3a3a3a;transform:scaleX(0.9211);">Find</span>
<svg style="left:1797.0px;top:77.5px;" width="5" height="3.5" viewBox="0 0 5 3.5"><path d="M0 0h5l-2.5 3.0z" fill="#555"/></svg>
<svg style="left:1745px;top:93px;" width="16" height="17" viewBox="0 0 16 17"><path d="M5 4.500c-3.500 .500-4.500 3.500-3 6 .800 1.300 2 2 4 2h2.500M6.500 10l2.300 2.500-2.300 2.500" fill="none" stroke="#3a8ed0" stroke-width="1.300"/></svg>
<span class="t" style="left:1750px;top:91.5px;font-size:11px;line-height:14px;color:#8e3fa8;transform:scaleX(1.0626);">b</span>
<span class="t" style="left:1754.5px;top:99.0px;font-size:10.5px;line-height:14px;color:#3a86c8;transform:scaleX(1.0476);">c</span>
<span class="t" style="left:1764.5px;top:94.0px;font-size:12px;line-height:16px;color:#3a3a3a;transform:scaleX(0.8972);">Replace</span>
<svg style="left:1747px;top:117px;" width="11" height="16" viewBox="0 0 11 16"><path d="M1 1v12l3-2.500 2 4.500 2-1-2-4.300h4z" fill="#fff" stroke="#3b3b3b" stroke-width="1.100"/></svg>
<span class="t" style="left:1764.5px;top:116.5px;font-size:12px;line-height:16px;color:#3a3a3a;transform:scaleX(0.9145);">Select</span>
<svg style="left:1798.5px;top:123.0px;" width="5" height="3.5" viewBox="0 0 5 3.5"><path d="M0 0h5l-2.5 3.0z" fill="#555"/></svg>
<span class="t" style="left:1758px;top:143.5px;font-size:12px;line-height:16px;color:#3b3b3b;transform:scaleX(0.9812);">Editing</span>
<div style="left:1819px;top:68px;width:1px;height:88px;background:#d2d0ce;"></div>
<svg style="left:1900px;top:149px;" width="11" height="6" viewBox="0 0 11 6"><path d="M0.500 5.500l5-5 5 5" fill="none" stroke="#444" stroke-width="1.400"/></svg>
<div style="left:556px;top:166px;width:94px;height:10px;background:#c8c8c8;"></div>
<div style="left:650px;top:166px;width:624px;height:10px;background:#ffffff;"></div>
<div style="left:1274px;top:166px;width:96px;height:10px;background:#c8c8c8;"></div>
<svg style="left:556px;top:166px;" width="814" height="10" viewBox="0 0 814 10"><rect x="9.5" y="5" width="1" height="1.500" fill="#333"/><rect x="21.5" y="5" width="1" height="1.500" fill="#333"/><rect x="33.5" y="5" width="1" height="1.500" fill="#333"/><rect x="45.5" y="3" width="1" height="5" fill="#444"/><rect x="57.5" y="5" width="1" height="1.500" fill="#333"/><rect x="69.5" y="5" width="1" height="1.500" fill="#333"/><rect x="81.5" y="5" width="1" height="1.500" fill="#333"/><rect x="105.5" y="5" width="1" height="1.500" fill="#333"/><rect x="117.5" y="5" width="1" height="1.500" fill="#333"/><rect x="129.5" y="5" width="1" height="1.500" fill="#333"/><rect x="141.5" y="3" width="1" height="5" fill="#444"/><rect x="153.5" y="5" width="1" height="1.500" fill="#333"/><rect x="165.5" y="5" width="1" height="1.500" fill="#333"/><rect x="177.5" y="5" width="1" height="1.500" fill="#333"/><rect x="201.5" y="5" width="1" height="1.500" fill="#333"/><rect x="213.5" y="5" width="1" height="1.500" fill="#333"/><rect x="225.5" y="5" width="1" height="1.500" fill="#333"/><rect x="237.5" y="3" width="1" height="5" fill="#444"/><rect x="249.5" y="5" width="1" height="1.500" fill="#333"/><rect x="261.5" y="5" width="1" height="1.500" fill="#333"/><rect x="273.5" y="5" width="1" height="1.500" fill="#333"/><rect x="297.5" y="5" width="1" height="1.500" fill="#333"/><rect x="309.5" y="5" width="1" height="1.500" fill="#333"/><rect x="321.5" y="5" width="1" height="1.500" fill="#333"/><rect x="333.5" y="3" width="1" height="5" fill="#444"/><rect x="345.5" y="5" width="1" height="1.500" fill="#333"/><rect x="357.5" y="5" width="1" height="1.500" fill="#333"/><rect x="369.5" y="5" width="1" height="1.500" fill="#333"/><rect x="393.5" y="5" width="1" height="1.500" fill="#333"/><rect x="405.5" y="5" width="1" height="1.500" fill="#333"/><rect x="417.5" y="5" width="1" height="1.500" fill="#333"/><rect x="429.5" y="3" width="1" height="5" fill="#444"/><rect x="441.5" y="5" width="1" height="1.500" fill="#333"/><rect x="453.5" y="5" width="1" height="1.500" fill="#333"/><rect x="465.5" y="5" width="1" height="1.500" fill="#333"/><rect x="489.5" y="5" width="1" height="1.500" fill="#333"/><rect x="501.5" y="5" width="1" height="1.500" fill="#333"/><rect x="513.5" y="5" width="1" height="1.500" fill="#333"/><rect x="525.5" y="3" width="1" height="5" fill="#444"/><rect x="537.5" y="5" width="1" height="1.500" fill="#333"/><rect x="549.5" y="5" width="1" height="1.500" fill="#333"/><rect x="561.5" y="5" width="1" height="1.500" fill="#333"/><rect x="585.5" y="5" width="1" height="1.500" fill="#333"/><rect x="597.5" y="5" width="1" height="1.500" fill="#333"/><rect x="609.5" y="5" width="1" height="1.500" fill="#333"/><rect x="621.5" y="3" width="1" height="5" fill="#444"/><rect x="633.5" y="5" width="1" height="1.500" fill="#333"/><rect x="645.5" y="5" width="1" height="1.500" fill="#333"/><rect x="657.5" y="5" width="1" height="1.500" fill="#333"/><rect x="681.5" y="5" width="1" height="1.500" fill="#333"/><rect x="693.5" y="5" width="1" height="1.500" fill="#333"/><rect x="705.5" y="5" width="1" height="1.500" fill="#333"/><rect x="717.5" y="3" width="1" height="5" fill="#444"/><rect x="729.5" y="5" width="1" height="1.500" fill="#333"/><rect x="741.5" y="5" width="1" height="1.500" fill="#333"/><rect x="753.5" y="5" width="1" height="1.500" fill="#333"/><rect x="777.5" y="5" width="1" height="1.500" fill="#333"/><rect x="789.5" y="5" width="1" height="1.500" fill="#333"/><rect x="801.5" y="5" width="1" height="1.500" fill="#333"/></svg>
<span class="t" style="left:743px;top:164.5px;font-size:10.5px;line-height:14px;color:#444;transform:scaleX(1.0276);">1</span>
<span class="t" style="left:839px;top:164.5px;font-size:10.5px;line-height:14px;color:#444;transform:scaleX(1.0276);">2</span>
<span class="t" style="left:935px;top:164.5px;font-size:10.5px;line-height:14px;color:#444;transform:scaleX(1.0276);">3</span>
<span class="t" style="left:1031px;top:164.5px;font-size:10.5px;line-height:14px;color:#444;transform:scaleX(1.0276);">4</span>
<span class="t" style="left:1127px;top:164.5px;font-size:10.5px;line-height:14px;color:#444;transform:scaleX(1.0276);">5</span>
<span class="t" style="left:1223px;top:164.5px;font-size:10.5px;line-height:14px;color:#444;transform:scaleX(1.0276);">6</span>
<span class="t" style="left:1319px;top:164.5px;font-size:10.5px;line-height:14px;color:#444;transform:scaleX(1.0276);">7</span>
<div style="left:0px;top:162px;width:22px;height:20px;background:#dbdbdb;"></div>
<div style="left:4px;top:165px;width:14.5px;height:13.5px;background:#ffffff;"></div>
<svg style="left:8.5px;top:169.5px;" width="8" height="8" viewBox="0 0 8 8"><path d="M1 0v6h5.500" fill="none" stroke="#555" stroke-width="1.800"/></svg>
<svg style="left:645px;top:162px;" width="11" height="23" viewBox="0 0 11 23"><path d="M0.500 1h9l-4.500 5.500zM0.500 12.500l4.500-5.500 4.500 5.500z" fill="#fff" stroke="#8a8a8a"/><rect x="0.500" y="14.500" width="9" height="6" fill="#fff" stroke="#8a8a8a"/></svg>
<svg style="left:1269px;top:169px;" width="11" height="10" viewBox="0 0 11 10"><path d="M0.500 8.500l4.500-6.500 4.500 6.500z" fill="#fff" stroke="#8a8a8a"/><path d="M5 2v6.500" stroke="#8a8a8a"/></svg>
<svg style="left:958px;top:172px;" width="9" height="7" viewBox="0 0 9 7"><path d="M0 6h9M4.500 0v6" stroke="#666" stroke-width="1.600" fill="none"/></svg>
<div style="left:959px;top:202px;width:7px;height:4px;background:#9a9a9a;"></div>
<div style="left:1366px;top:728px;width:3px;height:5px;background:#9a9a9a;"></div>
<svg style="left:1363px;top:203px;" width="6" height="6" viewBox="0 0 6 6"><path d="M6 0l-5 2 5 4z" fill="#8a8a8a"/></svg>
<div style="left:5px;top:201px;width:11px;height:51px;background:#c8c8c8;"></div>
<div style="left:5px;top:252px;width:11px;height:14px;background:#ffffff;"></div>
<div style="left:5px;top:266px;width:11px;height:791px;background:#c8c8c8;"></div>
<svg style="left:5px;top:200px;overflow:hidden;" width="11" height="857" viewBox="0 0 11 857"><rect x="5" y="61.5" width="2" height="1" fill="#333"/><rect x="5" y="73.5" width="2" height="1" fill="#333"/><rect x="5" y="85.5" width="2" height="1" fill="#333"/><rect x="3" y="97.5" width="5" height="1" fill="#444"/><rect x="5" y="109.5" width="2" height="1" fill="#333"/><rect x="5" y="121.5" width="2" height="1" fill="#333"/><rect x="5" y="133.5" width="2" height="1" fill="#333"/><rect x="5" y="157.5" width="2" height="1" fill="#333"/><rect x="5" y="169.5" width="2" height="1" fill="#333"/><rect x="5" y="181.5" width="2" height="1" fill="#333"/><rect x="3" y="193.5" width="5" height="1" fill="#444"/><rect x="5" y="205.5" width="2" height="1" fill="#333"/><rect x="5" y="217.5" width="2" height="1" fill="#333"/><rect x="5" y="229.5" width="2" height="1" fill="#333"/><rect x="5" y="253.5" width="2" height="1" fill="#333"/><rect x="5" y="265.5" width="2" height="1" fill="#333"/><rect x="5" y="277.5" width="2" height="1" fill="#333"/><rect x="3" y="289.5" width="5" height="1" fill="#444"/><rect x="5" y="301.5" width="2" height="1" fill="#333"/><rect x="5" y="313.5" width="2" height="1" fill="#333"/><rect x="5" y="325.5" width="2" height="1" fill="#333"/><rect x="5" y="349.5" width="2" height="1" fill="#333"/><rect x="5" y="361.5" width="2" height="1" fill="#333"/><rect x="5" y="373.5" width="2" height="1" fill="#333"/><rect x="3" y="385.5" width="5" height="1" fill="#444"/><rect x="5" y="397.5" width="2" height="1" fill="#333"/><rect x="5" y="409.5" width="2" height="1" fill="#333"/><rect x="5" y="421.5" width="2" height="1" fill="#333"/><rect x="5" y="445.5" width="2" height="1" fill="#333"/><rect x="5" y="457.5" width="2" height="1" fill="#333"/><rect x="5" y="469.5" width="2" height="1" fill="#333"/><rect x="3" y="481.5" width="5" height="1" fill="#444"/><rect x="5" y="493.5" width="2" height="1" fill="#333"/><rect x="5" y="505.5" width="2" height="1" fill="#333"/><rect x="5" y="517.5" width="2" height="1" fill="#333"/><rect x="5" y="541.5" width="2" height="1" fill="#333"/><rect x="5" y="553.5" width="2" height="1" fill="#333"/><rect x="5" y="565.5" width="2" height="1" fill="#333"/><rect x="3" y="577.5" width="5" height="1" fill="#444"/><rect x="5" y="589.5" width="2" height="1" fill="#333"/><rect x="5" y="601.5" width="2" height="1" fill="#333"/><rect x="5" y="613.5" width="2" height="1" fill="#333"/><rect x="5" y="637.5" width="2" height="1" fill="#333"/><rect x="5" y="649.5" width="2" height="1" fill="#333"/><rect x="5" y="661.5" width="2" height="1" fill="#333"/><rect x="3" y="673.5" width="5" height="1" fill="#444"/><rect x="5" y="685.5" width="2" height="1" fill="#333"/><rect x="5" y="697.5" width="2" height="1" fill="#333"/><rect x="5" y="709.5" width="2" height="1" fill="#333"/><rect x="5" y="733.5" width="2" height="1" fill="#333"/><rect x="5" y="745.5" width="2" height="1" fill="#333"/><rect x="5" y="757.5" width="2" height="1" fill="#333"/><rect x="3" y="769.5" width="5" height="1" fill="#444"/><rect x="5" y="781.5" width="2" height="1" fill="#333"/><rect x="5" y="793.5" width="2" height="1" fill="#333"/><rect x="5" y="805.5" width="2" height="1" fill="#333"/><rect x="5" y="829.5" width="2" height="1" fill="#333"/><rect x="5" y="841.5" width="2" height="1" fill="#333"/><rect x="5" y="853.5" width="2" height="1" fill="#333"/></svg>
<span class="t" style="left:6px;top:340px;font-size:10.500px;line-height:12px;color:#444;transform:rotate(-90deg);transform-origin:50% 50%;width:9px;text-align:center;">1</span>
<span class="t" style="left:6px;top:436px;font-size:10.500px;line-height:12px;color:#444;transform:rotate(-90deg);transform-origin:50% 50%;width:9px;text-align:center;">2</span>
<span class="t" style="left:6px;top:532px;font-size:10.500px;line-height:12px;color:#444;transform:rotate(-90deg);transform-origin:50% 50%;width:9px;text-align:center;">3</span>
<span class="t" style="left:6px;top:628px;font-size:10.500px;line-height:12px;color:#444;transform:rotate(-90deg);transform-origin:50% 50%;width:9px;text-align:center;">4</span>
<span class="t" style="left:6px;top:724px;font-size:10.500px;line-height:12px;color:#444;transform:rotate(-90deg);transform-origin:50% 50%;width:9px;text-align:center;">5</span>
<span class="t" style="left:6px;top:820px;font-size:10.500px;line-height:12px;color:#444;transform:rotate(-90deg);transform-origin:50% 50%;width:9px;text-align:center;">6</span>
<span class="t" style="left:6px;top:916px;font-size:10.500px;line-height:12px;color:#444;transform:rotate(-90deg);transform-origin:50% 50%;width:9px;text-align:center;">7</span>
<span class="t" style="left:6px;top:1012px;font-size:10.500px;line-height:12px;color:#444;transform:rotate(-90deg);transform-origin:50% 50%;width:9px;text-align:center;">8</span>
<div style="left:556px;top:297px;width:813px;height:0;border-top:1px dashed #7f7f7f;"></div>
<div style="left:601px;top:297px;width:13px;height:19px;background:#e4e4e4;border:1px solid #b5b5b5;border-left:none;box-sizing:border-box;"></div>
<span class="t" style="left:602.5px;top:300.5px;font-size:11px;line-height:14px;color:#444;transform:scaleX(1.2287);">r</span>
<span class="t" style="left:593.5px;top:877.5px;font-size:14px;line-height:17px;font-weight:bold;color:#5a5a5a;-webkit-text-stroke:0.350px #5a5a5a;letter-spacing:0.3px;transform-origin:0 0;transform:rotate(-90deg) translate(0,-8.5px) scaleX(1.0112);">CURPHEY & ROS</span>
<span class="t" style="left:606.5px;top:924.5px;font-size:11px;line-height:13px;font-weight:bold;color:#5a5a5a;-webkit-text-stroke:0.350px #5a5a5a;letter-spacing:0.5px;transform-origin:0 0;transform:rotate(-90deg) translate(0,-6.5px) scaleX(1.0317);">13011 W. WASHINGTON BLVD., LOS ANGELES, CALIFORNIA 90066</span>
<span class="t" style="left:618.5px;top:860px;font-size:11px;line-height:13px;font-weight:bold;color:#5a5a5a;-webkit-text-stroke:0.350px #5a5a5a;letter-spacing:0.5px;transform-origin:0 0;transform:rotate(-90deg) translate(0,-6.5px) scaleX(1.0484);">TEL:  310.822.7555</span>
<span class="t" style="left:618.5px;top:713px;font-size:11px;line-height:13px;font-weight:bold;color:#5a5a5a;-webkit-text-stroke:0.350px #5a5a5a;letter-spacing:0.5px;transform-origin:0 0;transform:rotate(-90deg) translate(0,-6.5px) scaleX(1.0423);">FAX:  310.305.0467</span>
<span class="t" style="left:7px;top:1059.5px;font-size:12px;line-height:16px;color:#444;transform:scaleX(0.9123);">Page 1 of 1</span>
<span class="t" style="left:83px;top:1059.5px;font-size:12px;line-height:16px;color:#444;">0 words</span>
<svg style="left:144px;top:1060px;" width="16" height="15" viewBox="0 0 16 15"><path d="M0.500 1.500h4.500l1.500 1v10l-1.500-1h-4.500zM6.500 2.500l1.500-1h2M6.500 12.500l1.500-1h1" fill="none" stroke="#555"/><path d="M9 7l2 2.500 4-5.500" fill="none" stroke="#555" stroke-width="1.200"/><path d="M6.500 12.500v2" stroke="#555"/></svg>
<svg style="left:1646px;top:1061px;" width="14" height="14" viewBox="0 0 14 14"><path d="M0.500 1.500c2-1 4.500-1 6.500 0c2-1 4.500-1 6.500 0v9.500c-2-1-4.500-1-6.500 0c-2-1-4.500-1-6.500 0z M7 1.500v9.500" fill="none" stroke="#666"/><path d="M2 4h3.500M2 6h3.500M2 8h3.500M8.500 4h3.500M8.500 6h3.500M8.500 8h3.500" stroke="#666" stroke-width="0.800"/><path d="M5.500 12l1.500 1.500 1.500-1.500" fill="none" stroke="#666"/></svg>
<div style="left:1672px;top:1058px;width:38px;height:20px;background:#c8c8c8;"></div>
<svg style="left:1684px;top:1061px;" width="15" height="14" viewBox="0 0 15 14"><rect x="0.500" y="0.500" width="14" height="12.500" fill="none" stroke="#555"/><path d="M2.500 3.500h10M2.500 6h10M2.500 8.500h10M2.500 11h10" stroke="#555" stroke-width="0.900"/></svg>
<svg style="left:1722px;top:1061px;" width="16" height="15" viewBox="0 0 16 15"><path d="M0.500 0.500h11v5M0.500 0.500v11.500h5" fill="none" stroke="#666"/><path d="M2.500 3h7M2.500 5.500h6M2.500 8h3.500" stroke="#666" stroke-width="0.900"/><circle cx="11" cy="10" r="3.800" fill="#e9e9e9" stroke="#555"/><path d="M8.500 8.500c1.500 1 2 2 1.500 4M11 6.500c0 1.500 1 2.500 3 3" fill="none" stroke="#555" stroke-width="0.800"/></svg>
<div style="left:1753px;top:1067px;width:7px;height:2px;background:#555;"></div>
<div style="left:1763px;top:1068px;width:100px;height:1px;background:#9a9a9a;"></div>
<div style="left:1811px;top:1060px;width:5px;height:15px;background:#666;"></div>
<div style="left:1867px;top:1067px;width:8px;height:2px;background:#555;"></div>
<div style="left:1870px;top:1064px;width:2px;height:8px;background:#555;"></div>
<span class="t" style="left:1886px;top:1059.5px;font-size:12px;line-height:16px;color:#444;transform:scaleX(0.8472);">100%</span>
<div style="left:173px;top:140px;width:428px;height:675px;background:#ffffff;border:1px solid #c0c0c0;box-sizing:border-box;box-shadow:1px 1px 3px rgba(0,0,0,0.18);"></div>
<div style="left:175px;top:142px;width:408px;height:22px;background:#ebebeb;"></div>
<span class="t" style="left:184px;top:144.4px;font-size:12px;line-height:16px;color:#4a4a4a;font-weight:bold;transform:scaleX(0.9592);">Confidential</span>
<div style="left:175px;top:518px;width:408px;height:22px;background:#ebebeb;"></div>
<span class="t" style="left:184px;top:520.5px;font-size:12px;line-height:16px;color:#4a4a4a;font-weight:bold;transform:scaleX(0.9276);">Disclaimers</span>
<div style="left:584px;top:159px;width:16px;height:557px;background:#f0f0f0;"></div>
<div style="left:584.5px;top:144px;width:14px;height:15px;background:#ffffff;border:1px solid #cdcdcd;box-sizing:border-box;"></div>
<svg style="left:588.5px;top:149.5px;" width="6" height="4" viewBox="0 0 6 4"><path d="M0 3.500l3-3.500 3 3.500z" fill="#606060"/></svg>
<div style="left:584.5px;top:159px;width:14px;height:233px;background:#ffffff;border:1px solid #b9b9b9;box-sizing:border-box;"></div>
<div style="left:584.5px;top:700px;width:14px;height:15px;background:#ffffff;border:1px solid #cdcdcd;box-sizing:border-box;"></div>
<svg style="left:588.5px;top:706px;" width="6" height="4" viewBox="0 0 6 4"><path d="M0 0h6l-3 3.500z" fill="#606060"/></svg>
<div style="left:183px;top:168px;width:118px;height:153px;background:#fff;border:1px solid #0a0a0a;border-right-width:1.500px;border-bottom-width:1.500px;box-sizing:border-box;overflow:hidden;">
<span class="t" style="left:-8.0px;top:64.5px;font-size:18px;line-height:22px;color:#d3d3d3;transform-origin:50% 50%;transform:rotate(-44deg) scaleX(0.7651);-webkit-text-stroke:0.250px #d3d3d3;filter:blur(0.350px);">CONFIDENTIAL</span>
</div>
<span class="t" style="left:198.5px;top:322.3px;font-size:11.5px;line-height:15px;color:#444;transform:scaleX(0.9465);">CONFIDENTIAL 1</span>
<div style="left:319px;top:168px;width:118px;height:153px;background:#fff;border:1px solid #0a0a0a;border-right-width:1.500px;border-bottom-width:1.500px;box-sizing:border-box;overflow:hidden;">
<span class="t" style="left:-18.5px;top:61.5px;font-size:21px;line-height:25px;color:#d3d3d3;transform-origin:50% 50%;transform:rotate(0deg) scaleX(0.5909);-webkit-text-stroke:0.250px #d3d3d3;filter:blur(0.350px);">CONFIDENTIAL</span>
</div>
<span class="t" style="left:334.5px;top:322.3px;font-size:11.5px;line-height:15px;color:#444;transform:scaleX(0.9465);">CONFIDENTIAL 2</span>
<div style="left:455px;top:168px;width:118px;height:153px;background:#fff;border:1px solid #0a0a0a;border-right-width:1.500px;border-bottom-width:1.500px;box-sizing:border-box;overflow:hidden;">
<span class="t" style="left:-21.3px;top:62.0px;font-size:22px;line-height:26px;color:#d3d3d3;transform-origin:50% 50%;transform:rotate(-45deg) scaleX(0.6575);-webkit-text-stroke:0.250px #d3d3d3;filter:blur(0.350px);">DO NOT COPY</span>
</div>
<span class="t" style="left:471.5px;top:322.3px;font-size:11.5px;line-height:15px;color:#444;transform:scaleX(0.9534);">DO NOT COPY 1</span>
<div style="left:183px;top:345px;width:118px;height:153px;background:#fff;border:1px solid #0a0a0a;border-right-width:1.500px;border-bottom-width:1.500px;box-sizing:border-box;overflow:hidden;">
<span class="t" style="left:-32.8px;top:58.5px;font-size:26px;line-height:31px;color:#d3d3d3;transform-origin:50% 50%;transform:rotate(0deg) scaleX(0.4958);-webkit-text-stroke:0.250px #d3d3d3;filter:blur(0.350px);">DO NOT COPY</span>
</div>
<span class="t" style="left:199px;top:499.3px;font-size:11.5px;line-height:15px;color:#444;transform:scaleX(0.9590);">DO NOT COPY 2</span>
<div style="left:183px;top:544px;width:118px;height:153px;background:#fff;border:1px solid #0a0a0a;border-right-width:1.500px;border-bottom-width:1.500px;box-sizing:border-box;overflow:hidden;">
<span class="t" style="left:-6.7px;top:53.0px;font-size:37px;line-height:44px;color:#d3d3d3;transform-origin:50% 50%;transform:rotate(-47deg) scaleX(0.7136);-webkit-text-stroke:0.250px #d3d3d3;filter:blur(0.350px);">DRAFT</span>
</div>
<span class="t" style="left:221px;top:698.3px;font-size:11.5px;line-height:15px;color:#444;transform:scaleX(0.9012);">DRAFT 1</span>
<div style="left:319px;top:544px;width:118px;height:153px;background:#fff;border:1px solid #0a0a0a;border-right-width:1.500px;border-bottom-width:1.500px;box-sizing:border-box;overflow:hidden;">
<span class="t" style="left:-18.8px;top:43.5px;font-size:47px;line-height:56px;color:#d3d3d3;transform-origin:50% 50%;transform:rotate(0deg) scaleX(0.5681);-webkit-text-stroke:0.250px #d3d3d3;filter:blur(0.350px);">DRAFT</span>
</div>
<span class="t" style="left:357px;top:698.3px;font-size:11.5px;line-height:15px;color:#444;transform:scaleX(0.9012);">DRAFT 2</span>
<div style="left:455px;top:544px;width:118px;height:153px;background:#fff;border:1px solid #0a0a0a;border-right-width:1.500px;border-bottom-width:1.500px;box-sizing:border-box;overflow:hidden;">
<span class="t" style="left:-6.9px;top:56.5px;font-size:31px;line-height:37px;color:#d3d3d3;transform-origin:50% 50%;transform:rotate(-47deg) scaleX(0.7633);-webkit-text-stroke:0.250px #d3d3d3;filter:blur(0.350px);">SAMPLE</span>
</div>
<span class="t" style="left:488.5px;top:698.3px;font-size:11.5px;line-height:15px;color:#444;transform:scaleX(0.9156);">SAMPLE 1</span>
<div style="left:175px;top:717px;width:425px;height:1px;background:#e1e1e1;"></div>
<div style="left:175px;top:792px;width:424px;height:22px;background:#c6c6c6;"></div>
<span class="t" style="left:207px;top:723.0px;font-size:12px;line-height:16px;color:#444;transform:scaleX(1.0071);"><u>M</u>ore Watermarks from Office.com</span>
<span class="t" style="left:207px;top:747.0px;font-size:12px;line-height:16px;color:#a9a9a9;transform:scaleX(0.9920);">Custom <u>W</u>atermark...</span>
<span class="t" style="left:207px;top:771.0px;font-size:12px;line-height:16px;color:#444;transform:scaleX(0.9695);"><u>R</u>emove Watermark</span>
<span class="t" style="left:207px;top:795.0px;font-size:12px;line-height:16px;color:#444;transform:scaleX(0.9639);"><u>S</u>ave Selection to Watermark Gallery...</span>
<svg style="left:586px;top:727px;" width="5" height="8" viewBox="0 0 5 8"><path d="M0 0l4.500 4-4.500 4z" fill="#555"/></svg>
<svg style="left:179px;top:722px;" width="18" height="18" viewBox="0 0 18 18"><circle cx="8" cy="8.500" r="7" fill="none" stroke="#555" stroke-width="1.100"/><ellipse cx="8" cy="8.500" rx="3.200" ry="7" fill="none" stroke="#555" stroke-width="1"/><path d="M1 8.500h14M2.500 4.500h11M2.500 12.500h11" stroke="#555" stroke-width="1"/><path d="M8 15h8M13.500 12.500l2.500 2.500-2.500 2.500" fill="none" stroke="#3a7ca8" stroke-width="1.300"/></svg>
<svg style="left:181px;top:747px;" width="13" height="17" viewBox="0 0 13 17"><path d="M0.500 0.500h7.500l4 4v11.500h-11.500z" fill="#f2f2f2" stroke="#b8b8b8"/><path d="M8 0.500v4h4" fill="none" stroke="#b8b8b8"/><path d="M3.500 12l2-6 2.500 4" fill="none" stroke="#d0d0d0" stroke-width="1.200"/></svg>
<svg style="left:181px;top:771px;" width="15" height="17" viewBox="0 0 15 17"><path d="M0.500 0.500h7.500l4 4v11.500h-11.500z" fill="#fdfdfd" stroke="#3b3b3b"/><path d="M8 0.500v4h4" fill="none" stroke="#3b3b3b"/><path d="M3 11l2-6 2.500 4" fill="none" stroke="#f0a0ac" stroke-width="1.200"/><path d="M6.500 10.500l6 6M12.500 10.500l-6 6" stroke="#d9534f" stroke-width="1.300"/></svg>
<svg style="left:181px;top:795px;" width="16" height="17" viewBox="0 0 16 17"><path d="M0.500 0.500h5.500l4 4v11.500h-9.500z" fill="#fdfdfd" stroke="#3b3b3b"/><path d="M6 0.500v4h4" fill="none" stroke="#3b3b3b"/><path d="M2.500 11l1.500-6 2 4" fill="none" stroke="#f3b0bb" stroke-width="1.200"/><rect x="5.500" y="7" width="8.500" height="8.500" fill="#f3e6f8" stroke="#c08ad6" stroke-width="1.100"/><rect x="7.500" y="7" width="4.500" height="3" fill="#dcb8ea"/><rect x="8" y="12.500" width="3.500" height="3" fill="#fff" stroke="#c08ad6" stroke-width="0.800"/></svg>
<div style="left:147px;top:48px;width:108px;height:125px;border:5px solid #86091e;border-radius:19px;box-sizing:border-box;"></div>
<span class="t" style="left:110px;top:76.5px;font-size:22.5px;line-height:29px;color:#86091e;font-weight:bold;transform:scaleX(1.1273);">(1)</span>
<div style="left:132px;top:786px;width:321px;height:37.5px;border:5px solid #86091e;border-radius:30px 20px 20px 30px/13px 12px 12px 13px;box-sizing:border-box;"></div>
<span class="t" style="left:91px;top:791.0px;font-size:22px;line-height:29px;color:#86091e;font-weight:bold;transform:scaleX(1.1529);">(2)</span>
<svg style="left:495px;top:804px;" width="13" height="20" viewBox="0 0 13 20"><path d="M1 1v15l3.500-3.200 2.500 5.700 2.200-1-2.500-5.500h4.800z" fill="#fff" stroke="#222" stroke-width="1"/></svg>
</body></html>
